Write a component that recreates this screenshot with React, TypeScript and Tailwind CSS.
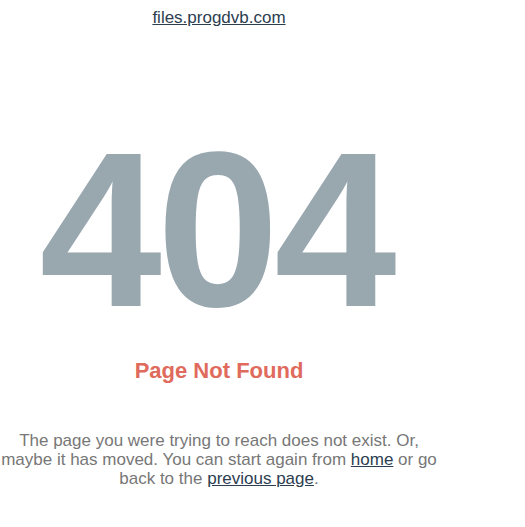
import React from "react";

export default function App() {
  return (
    <div className="w-[525px] h-[527px] bg-white" style={{ fontFamily: '"Liberation Sans", Arial, sans-serif' }}>
      <div className="w-[438px] flex flex-col items-center text-center">
        <a href="#" className="mt-[8px] text-[17px] leading-[20px] text-[#2c3e50] underline">files.progdvb.com</a>
        <div className="mt-[91px] pr-[7px] text-[220px] leading-[222px] font-bold text-[#99a7af] tracking-[-5px]">404</div>
        <div className="mt-[17px] text-[22px] leading-[26px] font-bold text-[#e06a5c]">Page Not Found</div>
        <p className="mt-[47px] text-[17px] leading-[19px] text-[#777777]">
          The page you were trying to reach does not exist. Or, maybe it has moved. You can start again from{" "}
          <a href="#" className="text-[#2c3e50] underline">home</a> or go back to the{" "}
          <a href="#" className="text-[#2c3e50] underline">previous page</a>.
        </p>
      </div>
    </div>
  );
}
